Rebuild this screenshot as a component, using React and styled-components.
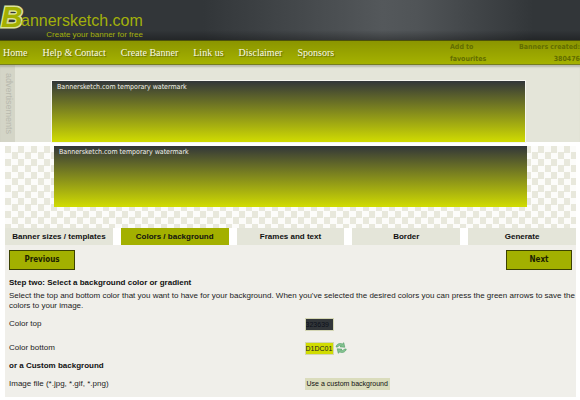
import React, { useState } from "react";
import styled, { createGlobalStyle } from "styled-components";

const tabs = [
  "Banner sizes / templates",
  "Colors / background",
  "Frames and text",
  "Border",
  "Generate",
];

const links = ["Home", "Help & Contact", "Create Banner", "Link us", "Disclaimer", "Sponsors"];

const App = () => {
  const [active, setActive] = useState(1);
  const [colors, setColors] = useState({ top: "323639", bottom: "D1DC01" });

  const step = (n) => {
    setActive(Math.min(tabs.length - 1, Math.max(0, active + n)));
  };

  return (
    <>
      <GlobalStyle />
      <Header>
        <Logo href="#">
          <BigLetter>B</BigLetter>
          <LogoText>
            <LogoName>annersketch.com</LogoName>
            <Tagline>Create your banner for free</Tagline>
          </LogoText>
        </Logo>
      </Header>
      <Nav>
        <Menu>
          {links.map((link) => (
            <MenuLink href="#" key={link}>{link}</MenuLink>
          ))}
        </Menu>
        <Favourites href="#">Add to favourites</Favourites>
        <Counter>Banners created: 380476</Counter>
      </Nav>
      <AdArea>
        <AdLabel>advertisements</AdLabel>
        <AdContent>
          <Banner $outlined>Bannersketch.com temporary watermark</Banner>
        </AdContent>
      </AdArea>
      <Main>
        <Preview>
          <Banner>Bannersketch.com temporary watermark</Banner>
        </Preview>
        <Tabs>
          {tabs.map((tab, i) => (
            <Tab key={tab} $active={i === active} onClick={() => setActive(i)}>{tab}</Tab>
          ))}
        </Tabs>
        <Panel>
          <Steps>
            <StepButton onClick={() => step(-1)}>Previous</StepButton>
            <StepButton onClick={() => step(1)}>Next</StepButton>
          </Steps>
          <Title>Step two: Select a background color or gradient</Title>
          <Text>
            Select the top and bottom color that you want to have for your background. When
            you've selected the desired colors you can press the green arrows to save the
            colors to your image.
          </Text>
          <Row>
            <label htmlFor="top">Color top</label>
            <ColorInput
              id="top"
              type="text"
              $color="#323639"
              $text="#0c101a"
              value={colors.top}
              onChange={(e) => setColors({ ...colors, top: e.target.value })}
            />
          </Row>
          <Row>
            <label htmlFor="bottom">Color bottom</label>
            <Field>
              <ColorInput
                id="bottom"
                type="text"
                $color="#d1dc01"
                $text="#222"
                value={colors.bottom}
                onChange={(e) => setColors({ ...colors, bottom: e.target.value })}
              />
              <SaveButton aria-label="Save colors">
                <Arrows />
              </SaveButton>
            </Field>
          </Row>
          <Title>or a Custom background</Title>
          <Row>
            <label htmlFor="custom">Image file (*.jpg, *.gif, *.png)</label>
            <CustomButton id="custom">Use a custom background</CustomButton>
          </Row>
        </Panel>
      </Main>
    </>
  );
};

const Arrows = () => (
  <svg width="12" height="12" viewBox="0 0 24 24">
    <g fill="#86c492" stroke="#4a9a5f" strokeWidth="1.2" strokeLinejoin="round">
      <path d="M2 10C3 4 9 1.500 14.500 4L17.500 1.500L19.500 10.500L10 9.500L12.500 7.500C9.500 6.500 7 7 5.500 10Z" />
      <path d="M22.500 14C21.500 20 15 22.500 9.500 20L6.500 22.500L4.500 13.500L14 14.500L11.500 16.500C14.500 17.500 17 17 19 14Z" />
    </g>
  </svg>
);

const GlobalStyle = createGlobalStyle`
  * {
    box-sizing: border-box;
  }
  body {
    margin: 0;
    background: #fff;
    color: #222;
    font-family: "Liberation Sans", Arial, sans-serif;
    font-size: 8px;
    line-height: 10px;
  }
  button, input {
    font: inherit;
    color: inherit;
    margin: 0;
  }
  button {
    cursor: pointer;
  }
  a {
    text-decoration: none;
  }
`;

const Header = styled.header`
  height: 40px;
  background:
    linear-gradient(rgba(0, 0, 0, 0) 75%, rgba(0, 0, 0, 0.3)),
    linear-gradient(90deg, #323639 35%, #54585b 66%, #505457 72%, #323639 92%);
`;

const Logo = styled.a`
  display: inline-flex;
  color: #a3b10b;
`;

const BigLetter = styled.span`
  width: 21px;
  padding-left: 1px;
  font-size: 30px;
  line-height: 34px;
  font-weight: bold;
  font-style: italic;
  color: #a3b000;
  -webkit-text-stroke: 3px #dde29a;
  paint-order: stroke fill;
`;

const LogoText = styled.span`
  display: flex;
  flex-direction: column;
  align-items: flex-end;
  padding-top: 12px;
`;

const LogoName = styled.span`
  font-size: 16px;
  line-height: 18px;
`;

const Tagline = styled.span`
  font-size: 8px;
  line-height: 10px;
`;

const Nav = styled.nav`
  display: flex;
  align-items: center;
  height: 25px;
  border-top: 1px solid #4c5208;
  border-bottom: 1px solid #757d22;
  background: linear-gradient(#8b9500, #a5b200);
  color: #626d00;
  font-family: "DejaVu Sans Condensed", "DejaVu Sans", sans-serif;
  font-size: 7px;
  line-height: 12px;
  font-weight: bold;
`;

const Menu = styled.div`
  display: flex;
  flex: 1;
  gap: 15px;
  padding-left: 3px;
`;

const MenuLink = styled.a`
  color: #fafae6;
  font-family: "Liberation Serif", serif;
  font-size: 10px;
  font-weight: normal;
  text-shadow: 1px 1px 1px #5f6800;
  white-space: nowrap;
`;

const Favourites = styled.a`
  width: 50px;
  color: inherit;
`;

const Counter = styled.div`
  width: 80px;
  padding-left: 14px;
  text-align: right;
`;

const AdArea = styled.div`
  display: flex;
  height: 77px;
  background: #e4e5d9;
  box-shadow: inset 0 3px 2px -1px #b9bab0;
`;

const AdLabel = styled.div`
  width: 15px;
  padding-top: 8px;
  background: rgba(150, 152, 130, 0.2);
  color: #b8b9ae;
  font-size: 9px;
  line-height: 12px;
  writing-mode: vertical-rl;
`;

const AdContent = styled.div`
  display: flex;
  flex: 1;
  justify-content: center;
  align-items: flex-end;
  padding-right: 18px;
`;

const Banner = styled.div`
  width: 100%;
  max-width: 473px;
  height: 61px;
  padding: 0 5px;
  background: linear-gradient(#323639, #d1dc01);
  box-shadow: ${(props) => (props.$outlined ? "0 0 0 1px #f6f6f0" : "none")};
  color: #f2f2ec;
  font-family: "DejaVu Sans Condensed", "DejaVu Sans", sans-serif;
  font-size: 7px;
  line-height: 12px;
`;

const Main = styled.main`
  margin: 4px 4px 2px 5px;
`;

const Preview = styled.div`
  display: flex;
  justify-content: center;
  height: 82px;
  background: repeating-conic-gradient(#fcfcfa 0 25%, #e8e8dc 0 50%) 0 0 / 13px 13px;
`;

const Tabs = styled.div`
  display: flex;
  gap: 8px;
  background: #fff;
`;

const Tab = styled.button`
  flex: 1;
  height: 17px;
  padding: 0;
  border: 0;
  background: ${(props) => (props.$active ? "#a3b000" : "#e4e5d9")};
  color: #111;
  font-weight: bold;
  white-space: nowrap;
`;

const Panel = styled.section`
  padding: 5px 4px 1px;
  background: #f0efea;
`;

const Steps = styled.div`
  display: flex;
  justify-content: space-between;
  margin-bottom: 7px;
`;

const StepButton = styled.button`
  width: 66px;
  height: 20px;
  padding: 0;
  border: 1px solid #3c4200;
  background: #a3b000;
  color: #1c1f00;
  font-family: "DejaVu Sans Condensed", "DejaVu Sans", sans-serif;
  font-weight: bold;
`;

const Title = styled.h2`
  margin: 0;
  color: #111;
  font-size: 8px;
  line-height: 12px;
`;

const Text = styled.p`
  margin: 2px -4px 1px 0;
`;

const Row = styled.div`
  display: grid;
  grid-template-columns: 21fr 19fr;
  align-items: center;
  justify-items: start;
  height: 24px;
`;

const Field = styled.div`
  display: flex;
  align-items: center;
  gap: 1px;
`;

const ColorInput = styled.input`
  width: 29px;
  height: 13px;
  padding: 0;
  border: 1px solid #d4d6b4;
  background: ${(props) => props.$color};
  color: ${(props) => props.$text};
  font-size: 7px;
`;

const SaveButton = styled.button`
  display: flex;
  padding: 0;
  border: 0;
  background: none;
`;

const CustomButton = styled.button`
  height: 12px;
  padding: 0 2px;
  border: 0;
  background: #dadcbc;
  color: #111;
  font-size: 7px;
`;

export default App;
